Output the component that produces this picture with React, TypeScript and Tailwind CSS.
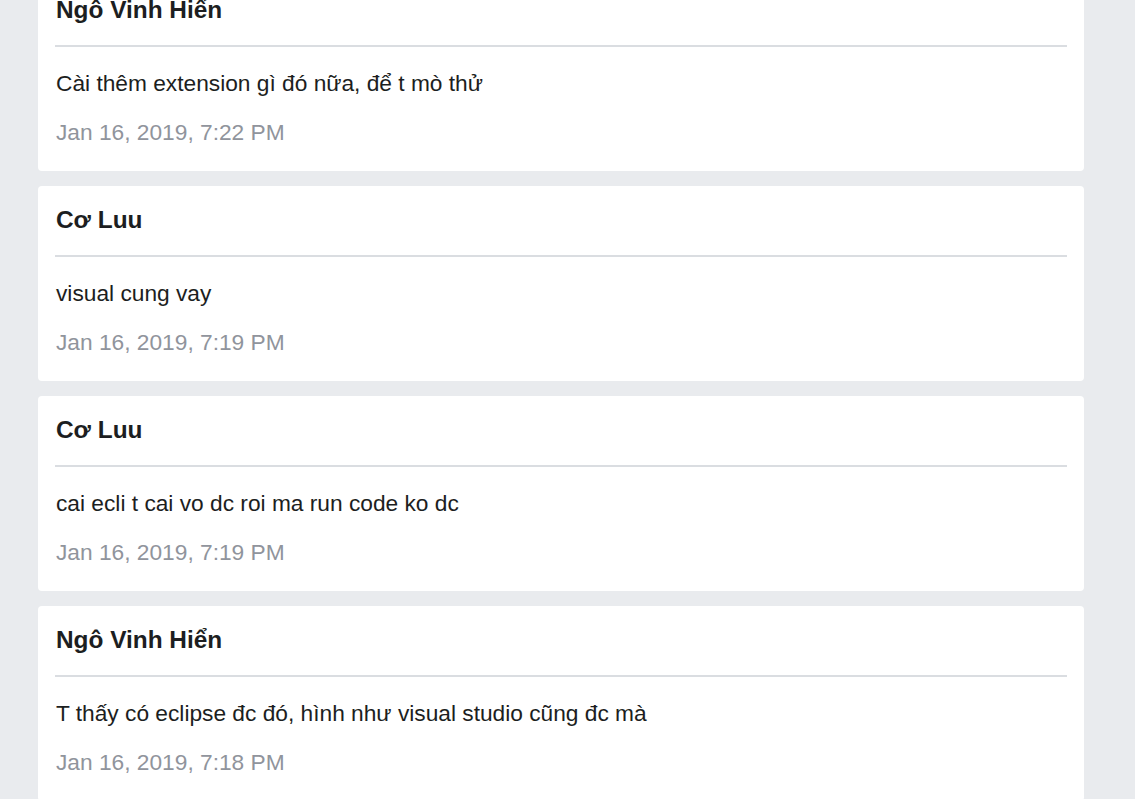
import React from 'react'

type Comment = {
  author: string
  text: string
  date: string
}

const comments: Comment[] = [
  { author: 'Ngô Vinh Hiển', text: 'Cài thêm extension gì đó nữa, để t mò thử', date: 'Jan 16, 2019, 7:22 PM' },
  { author: 'Cơ Luu', text: 'visual cung vay', date: 'Jan 16, 2019, 7:19 PM' },
  { author: 'Cơ Luu', text: 'cai ecli t cai vo dc roi ma run code ko dc', date: 'Jan 16, 2019, 7:19 PM' },
  { author: 'Ngô Vinh Hiển', text: 'T thấy có eclipse đc đó, hình như visual studio cũng đc mà', date: 'Jan 16, 2019, 7:18 PM' },
]

function CommentCard({ comment }: { comment: Comment }) {
  return (
    <div className="rounded-[4px] bg-white px-[18px] pt-[20px] pb-[26px]">
      <div className="text-[24.4px] font-bold leading-[28px] text-[#1c1e21]">{comment.author}</div>
      <div className="-mx-px mt-[21px] h-[2px] bg-[#dadde1]" />
      <div className="mt-[23px] text-[22.72px] leading-[26px] text-[#1c1e21]">{comment.text}</div>
      <div className="mt-[23px] text-[22.72px] leading-[26px] text-[#90949c]">{comment.date}</div>
    </div>
  )
}

function App() {
  return (
    <div className="h-[799px] overflow-hidden bg-[#e9ebee] font-['Liberation_Sans',Arial,sans-serif]">
      <div className="-mt-[24px] ml-[38px] flex w-[1046px] flex-col gap-[15px]">
        {comments.map((c, i) => (
          <CommentCard key={i} comment={c} />
        ))}
      </div>
    </div>
  )
}

export default App
